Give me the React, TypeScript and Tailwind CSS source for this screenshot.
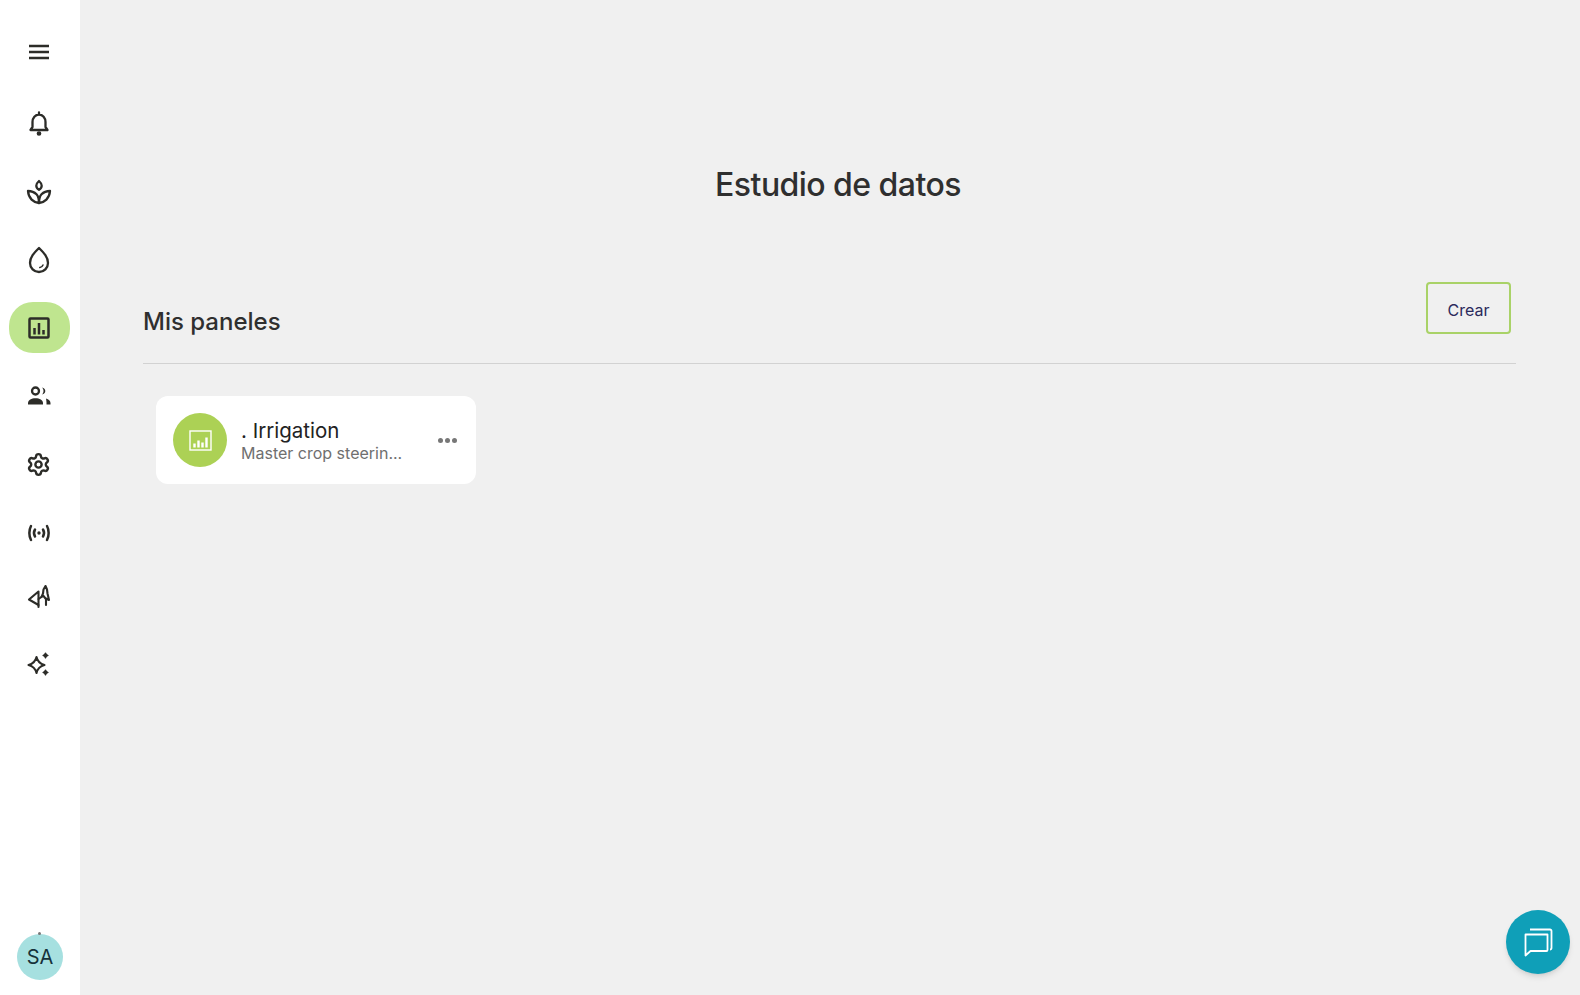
import { Settings } from "lucide-react"

const stroke = {
  fill: "none",
  stroke: "currentColor",
  strokeWidth: 2.3,
  strokeLinecap: "round" as const,
  strokeLinejoin: "round" as const,
}

function MenuIcon() {
  return (
    <svg width="24" height="24" viewBox="0 0 24 24" {...stroke} strokeWidth={2.6} strokeLinecap="butt">
      <path d="M2 6h20M2 12h20M2 18h20" />
    </svg>
  )
}

function BellIcon() {
  return (
    <svg width="26" height="26" viewBox="0 0 26 26" {...stroke}>
      <path d="M13 2.500v2M6.500 12c0-4 2.800-7.500 6.500-7.500s6.500 3.500 6.500 7.500v5l2 3h-17l2-3z" />
      <circle cx="13" cy="23.500" r="1.200" fill="currentColor" />
    </svg>
  )
}

function PlantIcon() {
  return (
    <svg width="26" height="26" viewBox="0 0 26 26" {...stroke}>
      <path d="M13 2c1.800 1.600 2.700 3.200 2.700 4.800 0 1.800-1 3-2.700 4-1.700-1-2.700-2.200-2.700-4C10.300 5.200 11.200 3.600 13 2z" />
      <path d="M13 24c-5.500-.5-10.500-4.500-11-12 3.500 0 6.500 1.300 8.500 3.300 1.600 1.700 2.500 4 2.500 8.700z" />
      <path d="M13 24c5.500-.5 10.500-4.500 11-12-3.500 0-6.500 1.300-8.500 3.300-1.600 1.700-2.500 4-2.500 8.700z" />
    </svg>
  )
}

function DropIcon() {
  return (
    <svg width="26" height="28" viewBox="0 0 26 28" {...stroke}>
      <path d="M13 2c5 5 9 9 9 15a9 9 0 0 1-18 0c0-6 4-10 9-15z" />
      <path d="M17 19c-.6 1.500-1.700 2.300-3.200 2.600" strokeWidth={1.500} />
    </svg>
  )
}

function ChartBoxIcon() {
  return (
    <svg width="22" height="22" viewBox="0 0 22 22" {...stroke} strokeWidth={2.5} strokeLinecap="butt" strokeLinejoin="miter">
      <rect x="1.500" y="1.500" width="19" height="19" rx="1" />
      <path d="M6.500 11v6.500M11 6v11.500M15.500 13v4.500" />
    </svg>
  )
}

function CardChartIcon() {
  return (
    <svg width="23" height="23" viewBox="0 0 23 23" fill="none" stroke="white" strokeWidth="1.400">
      <rect x="1" y="2" width="21" height="19" />
      <path d="M5.500 18.500v-4M9.500 18.500v-7M13.500 18.500v-5M17.500 18.500v-10" strokeWidth="2.400" />
    </svg>
  )
}

function UsersIcon() {
  return (
    <svg width="24" height="20" viewBox="0 0 24 20" fill="currentColor">
      <circle cx="8.500" cy="5" r="3.500" fill="none" stroke="currentColor" strokeWidth="2.300" />
      <path d="M1 18.500v-1.500c0-3 3.500-4.800 7.500-4.800s7.500 1.800 7.500 4.800v1.500z" />
      <path d="M15 1.500c2 .3 3.300 1.700 3.300 3.500S17 8.200 15 8.500c1-1 1.500-2.200 1.500-3.500S16 2.500 15 1.500z" />
      <path d="M19 12.500c2.700.7 4.500 2.300 4.500 4.500v1.500h-4v-2c0-1.500-.3-2.800-.5-4z" />
    </svg>
  )
}

function SignalIcon() {
  return (
    <svg width="24" height="18" viewBox="0 0 24 18" {...stroke} strokeWidth={2.500}>
      <path d="M4 2C1.800 6 1.800 12 4 16M20 2c2.200 4 2.200 10 0 14" />
      <path d="M8 5.500c-1.200 2-1.200 5 0 7M16 5.500c1.200 2 1.200 5 0 7" />
      <circle cx="12" cy="9" r="1.700" fill="currentColor" stroke="none" />
    </svg>
  )
}

function TreesIcon() {
  return (
    <svg width="24" height="24" viewBox="0 0 24 24" {...stroke} strokeWidth={2.100}>
      <path d="M11.500 6.500L2 14.500l9.500 5.500z" />
      <path d="M11.500 14l3-2M11.500 20v2" />
      <path d="M14.500 12l1.500-3.500.5-4L18.500 1l1.500 3.500.5 4 1.500 6.500-3-1.500V20M16.500 11l2 2.500" />
    </svg>
  )
}

function SparkleIcon() {
  return (
    <svg width="24" height="24" viewBox="0 0 24 24" {...stroke} strokeWidth={2.100}>
      <path d="M9.500 5c.9 4 3.500 6.800 8 8-4.500 1.200-7.100 4-8 8-.9-4-3.500-6.800-8-8 4.500-1.200 7.100-4 8-8z" />
      <path d="M18.500 1c.4 1.300 1.200 2 2.500 2.500-1.300.5-2.100 1.200-2.500 2.500-.4-1.300-1.200-2-2.500-2.500 1.300-.5 2.100-1.200 2.500-2.500z" fill="currentColor" strokeWidth={1.200} />
      <path d="M18.500 18c.4 1.300 1.200 2 2.500 2.500-1.300.5-2.100 1.200-2.500 2.500-.4-1.300-1.200-2-2.500-2.500 1.300-.5 2.100-1.200 2.500-2.500z" fill="currentColor" strokeWidth={1.200} />
    </svg>
  )
}

function ChatIcon() {
  return (
    <svg width="32" height="32" viewBox="0 0 32 32" fill="none" stroke="white" strokeWidth="1.800" strokeLinejoin="round">
      <path d="M8 3.500h20a1.500 1.500 0 0 1 1.500 1.500v17a1.500 1.500 0 0 1-1.500 1.500" />
      <path d="M3.500 8.500h22v15.500a1 1 0 0 1-1 1H8.500l-5 4.500z" />
    </svg>
  )
}

export default function App() {
  const navItems = [
    { icon: <BellIcon />, margin: "mt-[20px]" },
    { icon: <PlantIcon />, margin: "mt-[18px]" },
    { icon: <DropIcon />, margin: "mt-[17px]" },
    { icon: <ChartBoxIcon />, margin: "mt-[17px]", active: true },
    { icon: <UsersIcon />, margin: "mt-[17px]" },
    { icon: <Settings size={25} strokeWidth={2.3} />, margin: "mt-[18px]" },
    { icon: <SignalIcon />, margin: "mt-[17px]" },
    { icon: <TreesIcon />, margin: "mt-[13px]" },
    { icon: <SparkleIcon />, margin: "mt-[16px]" },
  ]

  return (
    <div className="h-screen flex overflow-hidden bg-[#f0f0f0] text-[#2f2f2f] font-['Inter',sans-serif]">
      {/* Sidebar */}
      <aside className="w-[80px] shrink-0 bg-white flex flex-col items-center pt-[27px] pb-[15px] text-[#2c2c28]">
        <div className="h-[50px] w-[60px] flex items-center justify-center ml-[-2px]">
          <MenuIcon />
        </div>
        {navItems.map((item, index) => (
          <div
            key={index}
            className={`h-[51px] w-[61px] ml-[-1px] pr-[2px] flex items-center justify-center rounded-[24px] ${item.margin} ${item.active ? "bg-[#bfe58f]" : ""}`}
          >
            {item.icon}
          </div>
        ))}
        <div className="relative mt-auto w-[46px] h-[46px] rounded-full bg-[#a6e0e0] flex items-center justify-center text-[20px] text-[#16323a]">
          SA
          <span className="absolute top-[-2px] left-[21px] w-[3px] h-[3px] rounded-full bg-[#777]" />
        </div>
      </aside>

      {/* Main */}
      <main className="flex-1 pl-[63px] pr-[64px]">
        <h1 className="pt-[165px] pl-[17px] text-center text-[32px] leading-[40px] font-medium tracking-[-0.55px]">
          Estudio de datos
        </h1>

        <div className="mt-[77px] flex items-start justify-between border-b border-[#d2d2d2] h-[82px]">
          <h2 className="mt-[24px] text-[24px] leading-[32px] font-medium">Mis paneles</h2>
          <button className="mr-[5px] w-[85px] h-[52px] pt-[3px] rounded-[4px] border-2 border-[#a9d267] text-[16px] text-[#2b2a5c]">
            Crear
          </button>
        </div>

        <div className="mt-[32px] ml-[13px] w-[320px] h-[88px] bg-white rounded-[12px] flex items-center pl-[17px] pr-[19px]">
          <div className="w-[54px] h-[54px] rounded-full bg-[#acd155] flex items-center justify-center shrink-0">
            <CardChartIcon />
          </div>
          <div className="ml-[14px] flex-1">
            <div className="text-[20.500px] leading-[25px] text-[#222]">. Irrigation</div>
            <div className="text-[16px] leading-[20px] text-[#6f6f6f]">Master crop steerin...</div>
          </div>
          <div className="flex gap-[2px]">
            <span className="w-[5px] h-[5px] rounded-full bg-[#777]" />
            <span className="w-[5px] h-[5px] rounded-full bg-[#777]" />
            <span className="w-[5px] h-[5px] rounded-full bg-[#777]" />
          </div>
        </div>
      </main>

      {/* Chat button */}
      <button className="absolute left-[1506px] top-[910px] w-[64px] h-[64px] rounded-full bg-[#0f9fb8] shadow-md flex items-center justify-center">
        <ChatIcon />
      </button>
    </div>
  )
}
